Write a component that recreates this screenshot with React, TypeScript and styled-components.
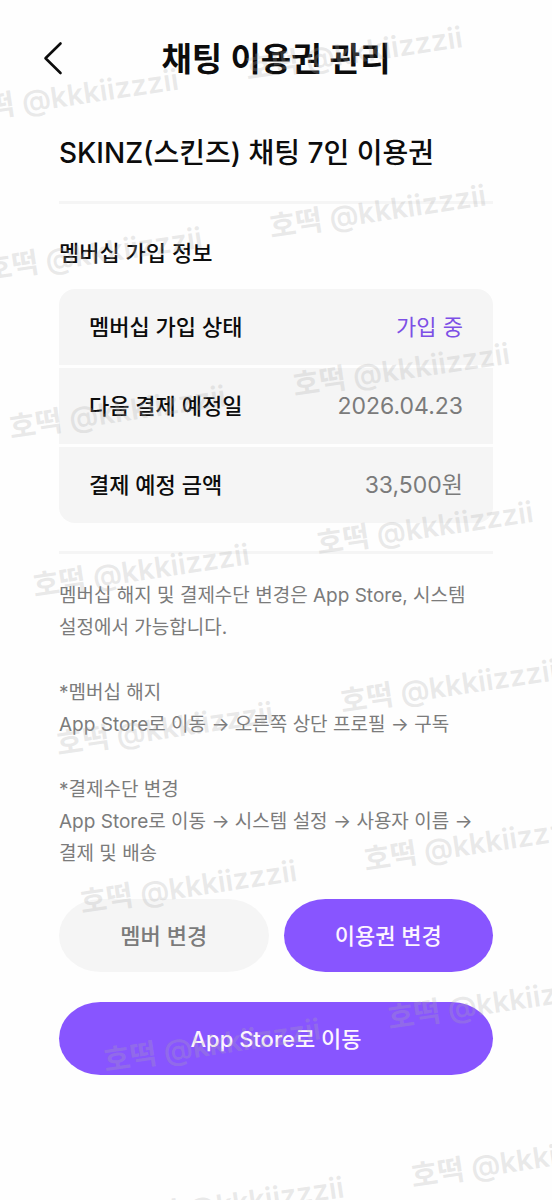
import styled, { createGlobalStyle } from "styled-components";

interface IMembershipRow {
    label: string;
    value: string;
    active?: boolean;
}

const membershipRows: IMembershipRow[] = [
    { label: "멤버십 가입 상태", value: "가입 중", active: true },
    { label: "다음 결제 예정일", value: "2026.04.23" },
    { label: "결제 예정 금액", value: "33,500원" },
];

const WATERMARK_TEXT = "호떡 @kkkiizzzii";
const WATERMARK_COUNT = 16;

const GlobalStyle = createGlobalStyle`
    :root {
        --color-primary: #8855ff;
        --color-primary-txt: #7d50e6;
        --color-surface: #f5f5f5;
        --color-txt: #0c0c0c;
        --color-txt-2: #7b7b7b;
    }

    * {
        box-sizing: border-box;
    }

    body {
        margin: 0;
        background: #fefefe;
        color: var(--color-txt);
        font-family: Inter, "Noto Sans CJK KR", sans-serif;
    }

    h1, h2, h3, p, dl, dd {
        margin: 0;
    }

    button {
        font-family: inherit;
        cursor: pointer;
    }
`;

const Page = styled.div`
    position: relative;
    min-height: 100vh;
    overflow: hidden;
`;

const Header = styled.header`
    display: grid;
    grid-template-columns: 48px 1fr 48px;
    align-items: center;
    padding: 34px 30px 0;
`;

const BackButton = styled.button`
    display: flex;
    align-items: center;
    justify-content: center;
    height: 48px;
    padding: 0;
    border: none;
    background: none;
    color: inherit;
`;

const Title = styled.h1`
    font-size: 33px;
    line-height: 50px;
    font-weight: 600;
    text-align: center;
`;

const Content = styled.main`
    padding: 49px 59px 60px;
`;

const ProductName = styled.h2`
    font-size: 28px;
    line-height: 40px;
    font-weight: 500;
`;

const Divider = styled.hr`
    height: 3px;
    margin: 28px 0 30px;
    border: none;
    background: var(--color-surface);
`;

const SectionTitle = styled.h3`
    margin-bottom: 17px;
    font-size: 22px;
    line-height: 38px;
    font-weight: 500;
`;

const InfoList = styled.dl`
    display: flex;
    flex-direction: column;
    gap: 3px;
    overflow: hidden;
    border-radius: 16px;
`;

const InfoRow = styled.div`
    display: flex;
    align-items: center;
    justify-content: space-between;
    padding: 20px 30px;
    background: var(--color-surface);
    font-size: 22px;
    line-height: 36px;
`;

const InfoLabel = styled.dt`
    font-weight: 500;
`;

const InfoValue = styled.dd<{ $active?: boolean }>`
    font-size: ${({ $active }) => ($active ? "22px" : "23px")};
    font-weight: 400;
    color: ${({ $active }) => ($active ? "var(--color-primary-txt)" : "var(--color-txt-2)")};
`;

const Guide = styled.div`
    display: flex;
    flex-direction: column;
    gap: 33px;
    margin-top: -4px;
    font-size: 19px;
    line-height: 32px;
    color: var(--color-txt-2);
    word-break: keep-all;
`;

const Actions = styled.div`
    display: grid;
    grid-template-columns: 1fr 1fr;
    gap: 30px 15px;
    margin-top: 29px;
`;

const ActionButton = styled.button<{ $primary?: boolean; $wide?: boolean }>`
    grid-column: ${({ $wide }) => ($wide ? "1 / -1" : "auto")};
    height: 73px;
    padding: 0 0 3px;
    border: none;
    border-radius: 42px / 37px;
    background: ${({ $primary }) => ($primary ? "var(--color-primary)" : "var(--color-surface)")};
    color: ${({ $primary }) => ($primary ? "#fdf5ff" : "var(--color-txt-2)")};
    font-size: 22px;
    font-weight: 500;
`;

const WatermarkLayer = styled.div`
    position: absolute;
    top: 92px;
    left: -41px;
    display: grid;
    grid-template-columns: repeat(2, 287px);
    grid-auto-rows: 160px;
    transform: rotate(-8.5deg);
    transform-origin: 0 0;
    pointer-events: none;
    user-select: none;
`;

const Watermark = styled.span`
    font-size: 29px;
    line-height: 40px;
    font-weight: 600;
    white-space: nowrap;
    color: rgba(172, 172, 172, 0.26);
`;

export default function App() {
    return (
        <Page>
            <GlobalStyle />

            <Header>
                <BackButton type="button" aria-label="뒤로">
                    <svg width="22" height="36" viewBox="0 0 22 36" fill="none">
                        <path
                            d="M17.5 2.5 L2.5 17.3 L17.5 32"
                            stroke="currentColor"
                            strokeWidth="2.6"
                            strokeLinecap="round"
                            strokeLinejoin="round"
                        />
                    </svg>
                </BackButton>
                <Title>채팅 이용권 관리</Title>
            </Header>

            <Content>
                <ProductName>SKINZ(스킨즈) 채팅 7인 이용권</ProductName>
                <Divider />

                <SectionTitle>멤버십 가입 정보</SectionTitle>
                <InfoList>
                    {membershipRows.map(({ label, value, active }) => (
                        <InfoRow key={label}>
                            <InfoLabel>{label}</InfoLabel>
                            <InfoValue $active={active}>{value}</InfoValue>
                        </InfoRow>
                    ))}
                </InfoList>
                <Divider />

                <Guide>
                    <p>멤버십 해지 및 결제수단 변경은 App Store, 시스템 설정에서 가능합니다.</p>
                    <p>
                        *멤버십 해지
                        <br />
                        App Store로 이동 → 오른쪽 상단 프로필 → 구독
                    </p>
                    <p>
                        *결제수단 변경
                        <br />
                        App Store로 이동 → 시스템 설정 → 사용자 이름 → 결제 및 배송
                    </p>
                </Guide>

                <Actions>
                    <ActionButton type="button">멤버 변경</ActionButton>
                    <ActionButton type="button" $primary>
                        이용권 변경
                    </ActionButton>
                    <ActionButton type="button" $primary $wide>
                        App Store로 이동
                    </ActionButton>
                </Actions>
            </Content>

            <WatermarkLayer aria-hidden="true">
                {Array.from({ length: WATERMARK_COUNT }, (_, i) => (
                    <Watermark key={i}>{WATERMARK_TEXT}</Watermark>
                ))}
            </WatermarkLayer>
        </Page>
    );
}
